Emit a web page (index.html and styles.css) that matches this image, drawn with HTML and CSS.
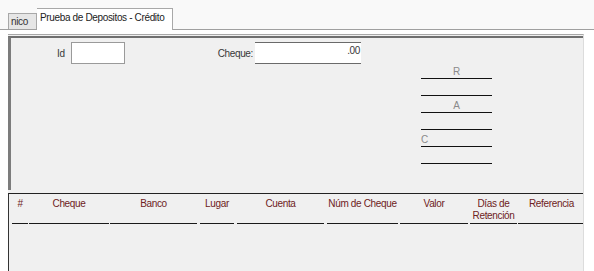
FILE: index.html
```html
<!DOCTYPE html>
<html lang="es">
<head>
  <meta charset="UTF-8" />
  <title>Prueba de Depositos - Crédito</title>
  <link rel="stylesheet" href="styles.css">
</head>
<body>
  <div class="tabs">
    <div class="tab">nico</div>
    <div class="tab active">Prueba de Depositos - Crédito</div>
  </div>

  <div class="panel">
    <div class="upper">
      <div class="field field-id">
        <label class="lbl-id">Id</label>
        <div class="box box-id"></div>
      </div>
      <div class="field field-cheque">
        <label class="lbl-cheque">Cheque:</label>
        <div class="box box-cheque">.00</div>
      </div>
      <div class="sign">
        <div class="sign-row">R</div>
        <div class="sign-row"></div>
        <div class="sign-row">A</div>
        <div class="sign-row"></div>
        <div class="sign-row left">C</div>
        <div class="sign-row"></div>
      </div>
    </div>

    <div class="grid">
      <div class="grid-head">
        <div class="col c1">#</div>
        <div class="col c2">Cheque</div>
        <div class="col c3">Banco</div>
        <div class="col c4">Lugar</div>
        <div class="col c5">Cuenta</div>
        <div class="col c6">Núm de Cheque</div>
        <div class="col c7">Valor</div>
        <div class="col c8">Días de<br>Retención</div>
        <div class="col c9">Referencia</div>
      </div>
    </div>
  </div>
</body>
</html>
```

FILE: styles.css
```css
body { margin: 0; background: #fff; font-family: "Liberation Sans", Arial, sans-serif; font-size: 10px; letter-spacing: -0.35px; color: #383838; overflow: hidden; }

/* tab strip */
.tabs { display: flex; align-items: flex-end; height: 29px; padding-left: 8px; border-bottom: 1px solid #a0a0a0; background: #f9f9f9; }
.tab { box-sizing: border-box; width: 29px; height: 16px; padding: 1px 2px 0; line-height: 13px; background: #e6e6e6; border: 1px solid #a8a8a8; border-bottom: none; color: #333; white-space: nowrap; }
.tab.active { height: 22px; width: 136px; margin-bottom: -1px; padding: 2px 2px 0 3px; background: #fff; border-left: none; color: #222; }

/* main panel */
.panel { width: 575px; height: 236px; margin: 4px 0 0 8px; background: #f0f0f0; border-top: 1px solid #a8a8a8; border-right: 1px solid #dcdcdc; }
.upper { height: 152px; margin-top: 1px; border-top: 2px solid #6f6f6f; border-left: 3px solid #7c7c7c; display: flex; align-items: flex-start; }

.field { display: flex; align-items: center; margin-top: 4px; }
.field-id { margin-left: 46px; }
.field-cheque { margin-left: 93px; }
.lbl-id { width: 14px; }
.lbl-cheque { width: 37px; padding-right: 2px; box-sizing: border-box; display: flex; justify-content: flex-end; }
.box { box-sizing: border-box; height: 22px; background: #fff; }
.box-id { width: 54px; border: 1px solid #9a9a9a; }
.box-cheque { width: 106px; border-top: 1px solid #6a6a6a; border-bottom: 1px solid #6a6a6a; text-align: right; padding: 1px 1px 0 0; line-height: 13px; }

.sign { width: 71px; margin: 24px 0 0 60px; }
.sign-row { height: 13px; padding-top: 3px; line-height: 13px; border-bottom: 1px solid #111; text-align: center; color: #8a8a8a; }
.sign-row.left { text-align: left; }

/* detail grid */
.grid { height: 79px; margin-top: 3px; border-top: 1px solid #222; border-left: 1px solid #333; overflow: hidden; }
.grid-head { display: flex; padding-left: 3px; }
.col { flex: none; height: 24px; padding: 4px 0 1px; line-height: 12px; border-bottom: 1px solid #1a1a1a; text-align: center; color: #6e2222; white-space: nowrap; }
.c1 { width: 16px; }
.c2 { width: 80px; margin-left: 1px; }
.c3 { width: 87px; margin-left: 1px; }
.c4 { width: 34px; margin-left: 3px; }
.c5 { width: 87px; margin-left: 3px; }
.c6 { width: 71px; margin-left: 3px; }
.c7 { width: 68px; margin-left: 2px; }
.c8 { width: 47px; margin-left: 2px; }
.c9 { width: 82px; margin-left: 1px; padding-left: 11px; text-align: left; box-sizing: border-box; height: 30px; }
```
